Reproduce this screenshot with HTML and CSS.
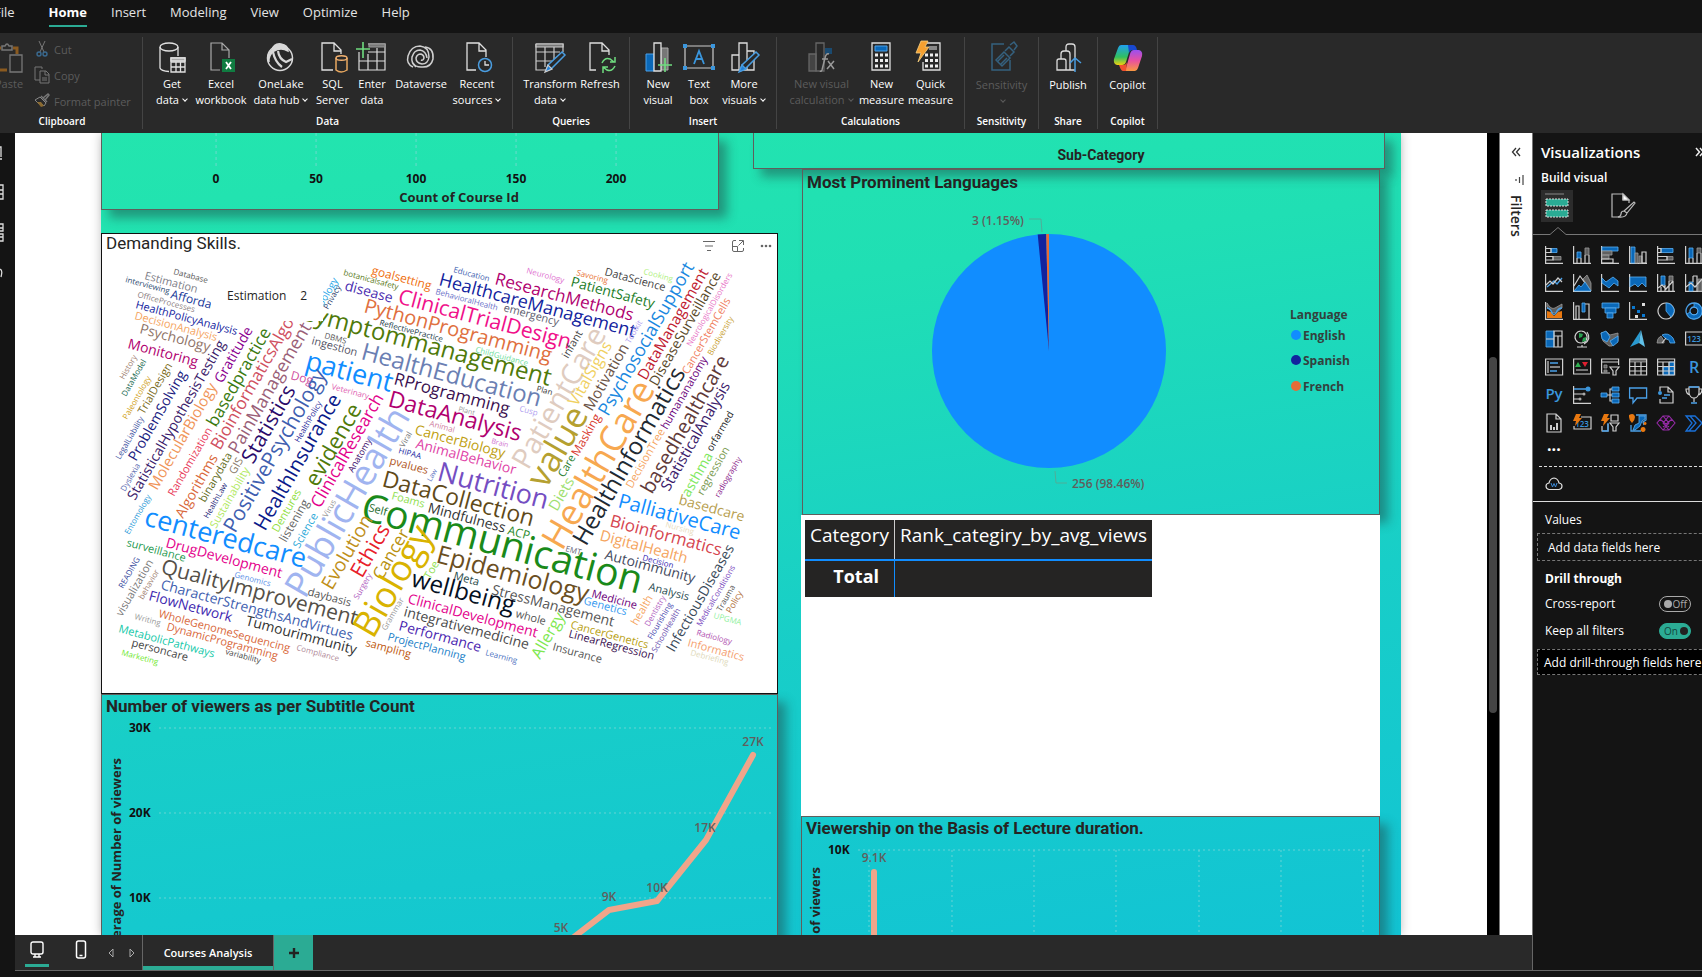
FILE: index.html
```html
<!DOCTYPE html>
<html lang="en">
<head>
<meta charset="utf-8">
<title>Courses Analysis</title>
<link rel="stylesheet" href="styles.css">
</head>
<body>
<nav class="menu">
  <button class="menu-item file">File</button>
  <button class="menu-item active">Home</button>
  <button class="menu-item">Insert</button>
  <button class="menu-item">Modeling</button>
  <button class="menu-item">View</button>
  <button class="menu-item">Optimize</button>
  <button class="menu-item">Help</button>
</nav>

<header class="ribbon">
  <section class="group g-clip">
    <div class="clip">
      <button class="tool paste off"><svg width="32" height="32" viewBox="0 0 32 32" fill="none"><path d="M6 6H2v22h10M18 6h4v6" stroke="#8a5a20" stroke-width="3"/><path d="M7 8V4h3q2-4 4 0h3v4z" stroke="#777" stroke-width="1.5"/><path d="M15 13h12v17H15z" fill="#292929" stroke="#777" stroke-width="1.3"/></svg><span>Paste</span></button>
      <div class="clip-list">
        <button class="mini off"><svg width="16" height="18" viewBox="0 0 16 18" fill="none" stroke="#777"><path d="M5 1l5 11M11 1L6 12"/><circle cx="5" cy="14" r="2" stroke="#3a6a90" stroke-width="1.4"/><circle cx="11" cy="14" r="2" stroke="#3a6a90" stroke-width="1.4"/></svg>Cut</button>
        <button class="mini off"><svg width="16" height="18" viewBox="0 0 16 18" fill="none" stroke="#777"><path d="M6 14H1V1h7v2M6 5h6l3 3v9H6zM11 5v4h4M8 12h5M8 14h5"/></svg>Copy</button>
        <button class="mini off"><svg width="16" height="18" viewBox="0 0 16 18" fill="none" stroke="#777"><path d="M9 6l5-4 1 1-4 5M7 4l6 6" stroke-width="1.5"/><path d="M6 5l6 6-2 3-3-3-2 1-4-4z" stroke="#888"/><path d="M3 10l4 5 3-1-3-4z" fill="#8a6a30" stroke="none"/></svg>Format painter</button>
      </div>
    </div>
    <h2>Clipboard</h2>
  </section>
  <section class="group g-data">
    <div class="tools">
      <button class="tool w48"><svg width="32" height="32" viewBox="0 0 32 32" fill="none" stroke="#e0e0e0" stroke-width="1.3"><ellipse cx="13" cy="5" rx="9" ry="4"/><path d="M4 5v21q1 3 9 3.500M22 5v9"/><path d="M15 16h14v14H15zM20 20v10M24.500 20v10M15 20h14M15 25h14"/><path d="M15 16h14v3H15z" fill="#aaa"/></svg><span>Get<br>data<i class="chev"></i></span></button>
      <button class="tool w50"><svg width="32" height="32" viewBox="0 0 32 32" fill="none"><path d="M15 28H6V1h11l7 7v8M17 1v7h7" stroke="#aaa" stroke-width="1.2"/><path d="M17 17h13v13H17z" fill="#107c41"/><path d="M21 20l5 7M26 20l-5 7" stroke="#fff" stroke-width="1.800"/></svg><span>Excel<br>workbook</span></button>
      <button class="tool w70"><svg width="32" height="32" viewBox="0 0 32 32" fill="none" stroke="#d8d8d8" stroke-width="1.500"><circle cx="15" cy="16" r="12.500"/><path d="M7 8Q9 1 16 2q7 1 7 7Q16 5 9 9 3 14 4 20 1 12 7 8z" fill="#d8d8d8"/><path d="M8 10q2 10 9 15M13 9q1 8 8 11l6-3" stroke-width="2.200"/></svg><span>OneLake<br>data hub<i class="chev"></i></span></button>
      <button class="tool w33"><svg width="32" height="32" viewBox="0 0 32 32" fill="none"><path d="M16 28H5V1h12l7 7v4M17 1v8h7" stroke="#e0e0e0" stroke-width="1.3"/><path d="M19 16v12q5 4 11 0V16" stroke="#e8a860" stroke-width="1.500"/><ellipse cx="24.500" cy="16" rx="5.500" ry="2.300" stroke="#f0b070" stroke-width="1.500"/></svg><span>SQL<br>Server</span></button>
      <button class="tool w46"><svg width="32" height="32" viewBox="0 0 32 32" fill="none" stroke="#ddd" stroke-width="1.2"><path d="M3 10v18h26V2H12M12 10h17M3 19h26M12 12v16M21 6v22"/><path d="M13 2h16v3H13z" fill="#777" stroke="#999"/><path d="M7 0v16M0 7h14" stroke="#6fdc7f" stroke-width="1.600"/></svg><span>Enter<br>data</span></button>
      <button class="tool w52"><svg width="32" height="32" viewBox="0 0 32 32" fill="none" stroke="#d0d0d0" stroke-width="1.500"><path d="M8 25Q1 22 3 14 6 4 15 4q9 1 9 11-1 7-7 7-6-1-6-6 1-4 5-4 3 1 3 4-1 3-3 2"/><path d="M11 25Q6 21 7 15q2-7 8-7 6 1 7 8"/><path d="M20 5q9 1 8 12-2 9-12 8-6 0-8-4"/></svg><span>Dataverse</span></button>
      <button class="tool w60"><svg width="32" height="32" viewBox="0 0 32 32" fill="none"><path d="M15 28H6V1h12l7 7v7M18 1v8h7" stroke="#e0e0e0" stroke-width="1.3"/><circle cx="24" cy="23" r="6.500" stroke="#4a9de0" stroke-width="1.500"/><path d="M24 19v4h4" stroke="#ddd" stroke-width="1.300"/></svg><span>Recent<br>sources<i class="chev"></i></span></button>
    </div>
    <h2>Data</h2>
  </section>
  <section class="group g-queries">
    <div class="tools">
      <button class="tool w58"><svg width="32" height="32" viewBox="0 0 32 32" fill="none" stroke="#ccc" stroke-width="1.2"><path d="M2 2h27v8M2 2v26h12M2 10h24M2 19h16M11 5v20M20 5v12"/><path d="M2 2h27v3H2z" fill="#777"/><path d="M12 29l2-6L28 10l3 3-14 14z" fill="#292929" stroke="#4a9de0" stroke-width="1.500"/><path d="M11 30l3-7 4 4z" fill="#2080d8"/></svg><span>Transform<br>data<i class="chev"></i></span></button>
      <button class="tool w42"><svg width="32" height="32" viewBox="0 0 32 32" fill="none"><path d="M12 28H6V1h12l7 7v5M18 1v8h7" stroke="#ddd" stroke-width="1.3"/><path d="M18 21q3-6 8-4l4 3M31 15v5h-5M31 24q-3 6-8 4l-4-3M19 31v-6h5" stroke="#6fdc7f" stroke-width="1.500"/></svg><span>Refresh</span></button>
    </div>
    <h2>Queries</h2>
  </section>
  <section class="group g-insert">
    <div class="tools">
      <button class="tool w38"><svg width="32" height="32" viewBox="0 0 32 32" fill="none"><path d="M4 12h8v17H4z" fill="#0a68b8" stroke="#4aa0e8"/><path d="M19 6h7v22h-7z" fill="#777" stroke="#aaa"/><path d="M12 1h7v28h-7z" fill="#292929" stroke="#e0e0e0" stroke-width="1.3"/><path d="M23 16v14M16 23h14" stroke="#6fdc7f" stroke-width="1.600"/></svg><span>New<br>visual</span></button>
      <button class="tool w44"><svg width="34" height="32" viewBox="0 0 34 32" fill="none"><path d="M3 4h28v22H3z" stroke="#ccc" stroke-width="1.2"/><path d="M1 2h4v4H1zM29 2h4v4h-4zM1 24h4v4H1zM29 24h4v4h-4z" fill="#3a96dd"/><path d="M12 22l5-13 5 13M14 17h6" stroke="#3a96dd" stroke-width="1.800"/></svg><span>Text<br>box</span></button>
      <button class="tool w46"><svg width="32" height="32" viewBox="0 0 32 32" fill="none" stroke="#ddd" stroke-width="1.3"><path d="M4 28V13h7v15zM11 28V1h8v27zM19 9h7v19h-7z"/><path d="M12 29l2-6L28 10l3 3-14 14z" fill="#292929" stroke="#4a9de0" stroke-width="1.500"/><path d="M11 30l3-7 4 4z" fill="#2080d8" stroke="#4a9de0"/></svg><span>More<br>visuals<i class="chev"></i></span></button>
    </div>
    <h2>Insert</h2>
  </section>
  <section class="group g-calc">
    <div class="tools">
      <button class="tool w72 off"><svg width="32" height="32" viewBox="0 0 32 32" fill="none" stroke="#666" stroke-width="1.3"><path d="M3 12h7v17H3z" fill="#444"/><path d="M10 1h8v28h-8z"/><path d="M19 6h7v6h-7z" fill="#1a4a70" stroke="none"/><path d="M23 12q-3-1-4 4l-3 12q-1 2-2 1M16 17h6M22 19l6 8M28 19l-7 8" stroke="#999" stroke-width="1.500"/></svg><span>New visual<br>calculation<i class="chev"></i></span></button>
      <button class="tool w48"><svg width="32" height="32" viewBox="0 0 32 32" fill="none"><path d="M6 1h18v27H6z" stroke="#ddd" stroke-width="1.3"/><path d="M9 4h12v5H9z" fill="#0a68b8" stroke="#4aa0e8"/><path d="M9 13h13M9 18.500h13M9 24h13" stroke="#eee" stroke-width="3" stroke-dasharray="3 2"/></svg><span>New<br>measure</span></button>
      <button class="tool w50"><svg width="32" height="32" viewBox="0 0 32 32" fill="none"><path d="M12 1h13v27H8V20" stroke="#ddd" stroke-width="1.3"/><path d="M14 4h8v4h-8z" fill="#888"/><path d="M10 13h13M10 18.500h13M10 24h13" stroke="#eee" stroke-width="3" stroke-dasharray="3 2"/><path d="M6-1h7l-3 6h4L3 20l3-9H1z" fill="#f5a030" stroke="#f8d080" stroke-width=".8"/></svg><span>Quick<br>measure</span></button>
    </div>
    <h2>Calculations</h2>
  </section>
  <section class="group g-sens">
    <div class="tools">
      <button class="tool w72 off low"><svg width="32" height="32" viewBox="0 0 32 32" fill="none" stroke="#35617f" stroke-width="1.500"><path d="M18 2H6v26h18V18"/><path d="M10 18l8-8 6 6-8 8zM19 9l4-4 5 5-4 4M24 3l4-3 3 4-3 4M12 19l6-6M15 22l6-6"/></svg><span>Sensitivity<br><i class="chev"></i></span></button>
    </div>
    <h2>Sensitivity</h2>
  </section>
  <section class="group g-share">
    <div class="tools">
      <button class="tool w48 low"><svg width="32" height="32" viewBox="0 0 32 32" fill="none" stroke="#ddd" stroke-width="1.3"><path d="M5 28V19q0-2 2-2h5q2 0 2 2v9zM9 17v-5q0-3 3-3h3q3 0 3 3v16h-4M14 9V5q0-3 3-3h3q3 0 3 3v11M18 28h5"/><path d="M23 30V16M18 21l5-5 6 5" stroke="#4a9de0" stroke-width="1.500"/></svg><span>Publish</span></button>
    </div>
    <h2>Share</h2>
  </section>
  <section class="group g-copilot">
    <div class="tools">
      <button class="tool w48 low"><svg width="32" height="32" viewBox="0 0 32 32"><defs><linearGradient id="ca" x1="0" y1="0" x2="0" y2="1"><stop offset="0" stop-color="#20a0f0"/><stop offset=".6" stop-color="#30c060"/><stop offset="1" stop-color="#f0d010"/></linearGradient><linearGradient id="cb" x1="0" y1="0" x2="0" y2="1"><stop offset="0" stop-color="#9a50f0"/><stop offset=".5" stop-color="#e850a0"/><stop offset="1" stop-color="#f89840"/></linearGradient></defs><path d="M9 3h12l-3 4-4 13q-1 3-4 3H5q-4-1-3-6L6 6q1-3 3-3z" fill="url(#ca)"/><path d="M16 3h5q3 0 4 5h-4q-3 0-4 3z" fill="#1848d0"/><path d="M23 29H11l3-3 4-14q1-4 4-4h5q4 1 3 6l-4 12q-1 3-3 3z" fill="url(#cb)"/><path d="M14 29H11q-2 0-4-6h4q3 0 4-3z" fill="#f05030"/></svg><span>Copilot</span></button>
    </div>
    <h2>Copilot</h2>
  </section>
</header>

<div class="work">
  <aside class="rail">
    <svg width="15" height="140" viewBox="0 0 15 140" fill="none" stroke="#ddd" stroke-width="1.3"><path d="M0 0h1v10M0 12h2M0 38h3v14H0M0 43h3M0 47h3M0 77h3v7H0M0 81h3M0 87h3v7H0M0 90h3M0 122q3 1 1 8"/></svg>
  </aside>
  <div class="main">
    <div class="canvas">
      <div class="page-area">
        <div class="report">
          <div class="col">
            <article class="card c-count">
              <svg class="plot" viewBox="102 133 616 76">
                <path class="grid-line light" d="M216 133v36M316 133v36M416 133v36M516 133v36M616 133v36"/>
                <g class="tick mid"><text x="216" y="183">0</text><text x="316" y="183">50</text><text x="416" y="183">100</text><text x="516" y="183">150</text><text x="616" y="183">200</text></g>
                <text class="axis mid" x="459" y="202">Count of Course Id</text>
              </svg>
            </article>
            <article class="card c-cloud">
              <div class="card-head"><h3>Demanding Skills.</h3>
                <div class="head-icons">
                  <svg width="14" height="12" viewBox="0 0 14 12" stroke="#666"><path d="M1 1.500h12M3 6h8M5 10.500h4"/></svg>
                  <svg width="14" height="14" viewBox="0 0 14 14" fill="none" stroke="#666"><path d="M5 1.500H3q-1.500 0-1.500 1.500v8q0 1.500 1.500 1.500h8q1.500 0 1.500-1.500V9M8 1.500h4.500V6M12 2L7.500 6.500M1.500 7.500h5v5"/></svg>
                  <svg width="12" height="4" viewBox="0 0 12 4" fill="#666"><circle cx="2" cy="2" r="1.300"/><circle cx="6" cy="2" r="1.300"/><circle cx="10" cy="2" r="1.300"/></svg>
                </div>
              </div>
              <svg class="plot" id="cloud" viewBox="102 257 675 436"></svg>
              <div class="tip"><span>Estimation</span><span>2</span></div>
            </article>
            <article class="card c-line">
              <h3 class="bold">Number of viewers as per Subtitle Count</h3>
              <svg class="plot" viewBox="102 716 675 260">
                <path class="grid-line" d="M159 727h612M159 812h612M159 897h612"/>
                <g class="tick"><text x="129" y="731">30K</text><text x="129" y="816">20K</text><text x="129" y="901">10K</text></g>
                <path class="series" d="M561 946l48-37 48-9 49-61 47-85"/>
                <g class="value mid"><text x="753" y="745">27K</text><text x="705" y="831">17K</text><text x="657" y="891">10K</text><text x="609" y="900">9K</text><text x="561" y="931">5K</text></g>
                <text class="axis end" transform="translate(121 757) rotate(-90)">Average of Number of viewers</text>
              </svg>
            </article>
          </div>
          <div class="col">
            <article class="card c-sub"><h4>Sub-Category</h4></article>
            <article class="card c-pie">
              <h3 class="bold">Most Prominent Languages</h3>
              <svg class="plot" viewBox="803 193 576 321">
                <circle cx="1049" cy="351" r="117" fill="#118dff"/>
                <path d="M1049 351L1037.700 234.500A117 117 0 0 1 1046.200 234z" fill="#12239e"/>
                <path d="M1049 351L1046.200 234H1049z" fill="#e66c37"/>
                <path class="leader" d="M1029 219h12l1 13M1055 471l1 12h11"/>
                <g class="value"><text x="972" y="225">3 (1.15%)</text><text x="1072" y="488">256 (98.46%)</text></g>
                <g class="legend"><text x="1290" y="319">Language</text><text x="1303" y="340">English</text><text x="1303" y="365">Spanish</text><text x="1303" y="391">French</text></g>
                <circle cx="1296" cy="335" r="5" fill="#118dff"/><circle cx="1296" cy="360" r="5" fill="#12239e"/><circle cx="1296" cy="386" r="5" fill="#e66c37"/>
              </svg>
            </article>
            <article class="c-table">
              <table>
                <thead><tr><th>Category</th><th>Rank_categiry_by_avg_views</th></tr></thead>
                <tbody><tr><td>Total</td><td></td></tr></tbody>
              </table>
            </article>
            <article class="card c-bar">
              <h3 class="bold">Viewership on the Basis of Lecture duration.</h3>
              <svg class="plot" viewBox="802 838 577 130">
                <path class="grid-line" d="M858 849h512M869 849v120M952 849v120M1034 849v120M1116 849v120M1199 849v120M1281 849v120M1363 849v120"/>
                <g class="tick"><text x="828" y="853">10K</text></g>
                <path class="series" d="M874 871v100"/>
                <text class="value mid" x="874" y="861">9.1K</text>
                <text class="axis end" transform="translate(820 866) rotate(-90)">Average of Number of viewers</text>
              </svg>
            </article>
          </div>
        </div>
      </div>
      <div class="scroll"><div class="thumb"></div></div>
      <aside class="filters">
        <svg width="10" height="10" viewBox="0 0 10 10" fill="none" stroke="#333" stroke-width="1.300"><path d="M5 1L1.500 5 5 9M9 1L5.500 5 9 9"/></svg>
        <svg class="funnel" width="10" height="12" viewBox="0 0 10 12" stroke="#444" stroke-width="1.200"><path d="M9 1v10M5.500 3v6M2 5v2"/></svg>
        <span>Filters</span>
      </aside>
    </div>
    <footer class="tabs">
      <button class="view on" aria-label="Desktop layout"><svg width="14" height="18" viewBox="0 0 14 18" fill="none" stroke="#fff" stroke-width="1.400"><rect x="1" y="1" width="12" height="12" rx="2"/><path d="M5 13v3M9 13v3M3 16h8"/></svg></button>
      <button class="view" aria-label="Mobile layout"><svg width="12" height="20" viewBox="0 0 12 20" fill="none" stroke="#fff" stroke-width="1.500"><rect x="1.500" y="1" width="9" height="17" rx="2"/><path d="M4.500 15.500h3"/></svg></button>
      <button class="step" aria-label="Previous page"><svg width="6" height="10" viewBox="0 0 6 10" fill="none" stroke="#aaa"><path d="M5 1v8L1 5z"/></svg></button>
      <button class="step" aria-label="Next page"><svg width="6" height="10" viewBox="0 0 6 10" fill="none" stroke="#aaa"><path d="M1 1v8l4-4z"/></svg></button>
      <button class="tab">Courses Analysis</button>
      <button class="add" aria-label="New page"><svg width="12" height="12" viewBox="0 0 12 12" stroke="#222" stroke-width="2.400"><path d="M6 1v10M1 6h10"/></svg></button>
    </footer>
  </div>
  <aside class="viz">
    <div class="viz-head"><h2>Visualizations</h2><svg width="10" height="10" viewBox="0 0 10 10" fill="none" stroke="#eee" stroke-width="1.500"><path d="M1 1l3.500 4L1 9M5 1l3.500 4L5 9"/></svg></div>
    <h3>Build visual</h3>
    <div class="modes">
      <button class="mode on" aria-label="Build"><svg width="24" height="26" viewBox="0 0 24 26" fill="none"><path d="M0 1h19" stroke="#888"/><path d="M1 6h22v7H1zM1 17h22v7H1z" fill="#2bab94" stroke="#ddd" stroke-dasharray="2 1"/></svg></button>
      <button class="mode" aria-label="Format"><svg width="26" height="26" viewBox="0 0 26 26" fill="none" stroke="#bbb" stroke-width="1.200"><path d="M8 24H1V1h11l6 6v3M12 1v6h6"/><path d="M12 1v6h6z" fill="#fff"/><path d="M13 18L23 9l1 1-8 10zM13 18q-3 0-3 3 0 2-3 3 8 1 9-4z"/></svg></button>
    </div>
    <svg class="caret" viewBox="0 0 170 10" width="170" height="10" fill="none" stroke="#777"><path d="M0 8.500h17l8-7 8 7h140"/></svg>
    <div class="icons" id="icons"></div>
    <div class="more">...</div>
    <div class="cloud-row"><svg width="18" height="14" viewBox="0 0 18 14" fill="none"><path d="M4 12.500q-3-.5-3-3.500 0-2.500 3-3 1-4.500 5-5 4 .5 5 5 3 .5 3 3 0 3-3 3.500z" stroke="#ddd" stroke-width="1.200"/><path d="M6 6l1.500 4L9 6.500l1.500 3.500L12 6" stroke="#3a8ad8"/></svg></div>
    <div class="fields">
      <p>Values</p>
      <button class="drop">Add data fields here</button>
      <h4>Drill through</h4>
      <div class="row"><label for="cr">Cross-report</label><span class="toggle"><input type="checkbox" id="cr"><span>Off</span></span></div>
      <div class="row"><label for="kf">Keep all filters</label><span class="toggle checked"><input type="checkbox" id="kf" checked><span>On</span></span></div>
      <button class="drop dark">Add drill-through fields here</button>
    </div>
  </aside>
</div>
<div class="status"></div>
<script src="script.js"></script>
</body>
</html>
```
FILE: styles.css
```css
* { box-sizing: border-box; }
body { margin: 0; height: 100vh; display: flex; flex-direction: column; overflow: hidden; background: #141414; color: #fff; font-family: "Open Sans", "Noto Sans", sans-serif; font-size: 12px; }
button { background: none; border: 0; padding: 0; margin: 0; color: inherit; font: inherit; }
h2, h3, h4, p { margin: 0; font-weight: 400; }
svg { display: block; flex: none; overflow: visible; }

.menu { height: 33px; flex: none; display: flex; gap: 24px; padding-top: 2px; margin-left: -6px; }
.menu-item { height: 25px; font-size: 13px; line-height: 20px; padding-bottom: 3px; color: #e4e4e4; border-bottom: 2px solid transparent; }
.menu-item.file { margin-right: 10px; }
.menu-item.active { font-weight: 700; color: #fff; border-color: #2bab94; }

.ribbon { height: 100px; flex: none; display: flex; background: #292929; padding: 4px 0; }
.group { display: flex; flex-direction: column; justify-content: space-between; border-right: 1px solid #444; height: 92px; padding-top: 5px; }
.group h2 { font-size: 10px; line-height: 16px; text-align: center; font-weight: 600; }
.g-clip { width: 143px; }
.g-clip h2 { padding-right: 18px; }
.g-data { width: 370px; }
.g-queries { width: 117px; }
.g-insert { width: 147px; }
.g-calc { width: 188px; }
.g-sens { width: 74px; }
.g-share { width: 59px; }
.g-copilot { width: 60px; }
.tools { display: flex; justify-content: center; }
.tool { display: flex; flex-direction: column; align-items: center; white-space: nowrap; line-height: 16px; gap: 2px; font-size: 11px; font-weight: 500; }
.tool.low span { padding-top: 1px; }
.tool span { text-align: center; }
.w33 { width: 33px; } .w38 { width: 38px; } .w42 { width: 42px; } .w44 { width: 44px; } .w46 { width: 46px; } .w48 { width: 48px; }
.w50 { width: 50px; } .w52 { width: 52px; } .w58 { width: 58px; } .w60 { width: 60px; } .w70 { width: 70px; } .w72 { width: 72px; }
.off { color: #5c5c5c; }
.chev { display: inline-block; width: 4px; height: 4px; margin: 0 1px 3px 4px; border: solid currentColor; border-width: 0 1px 1px 0; transform: rotate(45deg); }
.clip { display: flex; }
.paste { width: 33px; margin-left: -5px; align-items: flex-start; }
.clip-list { display: flex; flex-direction: column; gap: 8px; padding-left: 6px; margin-top: -2px; }
.mini { display: flex; gap: 4px; align-items: center; height: 18px; white-space: nowrap; font-size: 11px; }

.work { flex: 1; min-height: 0; display: flex; }
.rail { width: 15px; flex: none; padding-top: 14px; background: #141414; }
.main { flex: 1; min-width: 0; display: flex; flex-direction: column; border-bottom: 1px solid #666; }
.canvas { flex: 1; min-height: 0; display: flex; background: #fff; }
.page-area { flex: 1; min-width: 0; overflow: hidden; padding: 0 86px; }
.report { display: grid; grid-template-columns: 677fr 584fr; column-gap: 23px; padding-right: 16px; height: 100%; background: linear-gradient(172deg, #23e5ae 0%, #20dfb4 25%, #18cec8 62%, #12c4d4 100%); box-shadow: 0 0 10px rgba(0,0,0,.25); }
.col { min-width: 0; color: #252423; }
.card { border: 1px solid #605e5c; box-shadow: 8px 8px 10px rgba(30,60,60,.45); position: relative; }
.plot { width: 100%; height: auto; font-family: "Open Sans", sans-serif; }
h3 { color: #252423; }
.card h3 { font-family: Roboto, sans-serif; font-size: 17px; line-height: 22px; padding-left: 4px; }
.card h3.bold { font-weight: 700; }
.c-count { width: 91.300%; border-top: 0; margin-bottom: 23px; }
.c-cloud { background: #fff; border-color: #111; box-shadow: none; }
.card-head { display: flex; justify-content: space-between; height: 23px; }
.card-head h3 { line-height: 18px; }
.head-icons { display: flex; gap: 15px; align-items: center; padding-right: 5px; }
.tip { position: absolute; left: 109px; top: 35px; width: 112px; height: 52px; padding: 0 16px; display: flex; align-items: center; justify-content: space-between; background: #fff; font-size: 12px; }
.c-sub { margin-left: -48px; height: 36px; border-top: 0; display: flex; justify-content: center; padding: 12px 0 0 64px; }
.c-sub h4 { font-family: Roboto, sans-serif; font-size: 14px; line-height: 20px; font-weight: 700; }
.c-pie { margin: 0 5px 0 1px; }
.c-pie h3 { padding-top: 1px; }
.c-table { background: #fff; height: 301px; margin-right: 5px; padding: 5px 4px; position: relative; }
.c-bar { margin-right: 5px; }
table { border-collapse: collapse; background: #252423; color: #fff; font-size: 19px; }
th, td { padding: 2px 5px; height: 37px; vertical-align: top; font-weight: 400; text-align: left; line-height: 26px; }
th { height: 40px; border-bottom: 2px solid #118dff; }
th:first-child { border-right: 1px solid #ccc; }
td:first-child { border-right: 1px solid #118dff; font-weight: 700; text-align: right; padding-right: 15px; font-size: 18px; }
.grid-line { stroke: #8ad8d8; stroke-width: 1; stroke-dasharray: 2 3; fill: none; opacity: .7; }
.grid-line.light { stroke-dasharray: 3 3; }
.tick { font-size: 12px; font-weight: 700; fill: #111; }
.value { font-size: 12px; font-weight: 600; fill: #605e5c; }
.axis { font-size: 13px; font-weight: 700; fill: #252423; }
.legend { font-size: 12px; font-weight: 700; fill: #33413d; }
.mid { text-anchor: middle; }
.end { text-anchor: end; }
.series { stroke: #f0a58a; stroke-width: 6; fill: none; stroke-linecap: round; stroke-linejoin: round; }
.leader { stroke: #4fae98; fill: none; }
.scroll { width: 12px; flex: none; background: #000; padding: 224px 2px 0; }
.thumb { height: 356px; border-radius: 4px; background: #444; }
.filters { width: 34px; flex: none; border: solid #777; border-width: 0 1px; display: flex; flex-direction: column; align-items: center; padding-top: 14px; gap: 17px; color: #252423; }
.filters .funnel { margin-left: 6px; }
.filters span { writing-mode: vertical-rl; font-size: 14px; margin-top: -8px; line-height: 18px; font-weight: 600; }

.tabs { height: 35px; flex: none; display: flex; background: #292929; border-right: 1px solid #666; }
.view { width: 24px; margin-left: 10px; display: flex; justify-content: center; align-items: center; border-bottom: 3px solid transparent; height: 32px; }
.view.on { border-color: #2bab94; }
.view + .view { margin-left: 20px; }
.step { width: 21px; padding-left: 8px; }
.view + .step { margin-left: 7px; }
.tab { width: 132px; border: solid #666; border-width: 0 1px; box-shadow: inset 0 -4px #2bab94; font-weight: 600; font-size: 11px; }
.add { width: 39px; background: #2bab94; display: flex; align-items: center; justify-content: center; }
.status { height: 6px; flex: none; background: #141414; }

.viz { width: 169px; flex: none; overflow: hidden; border-bottom: 1px solid #666; }
.viz-head { display: flex; align-items: center; justify-content: space-between; padding: 8px 0 0 8px; width: 172px; }
.viz h2 { font-size: 15px; line-height: 22px; font-weight: 600; }
.viz h3 { font-size: 12px; line-height: 20px; font-weight: 600; color: #fff; padding: 5px 0 2px 8px; }
.modes { display: flex; gap: 35px; padding-left: 8px; }
.mode { width: 32px; height: 32px; display: flex; align-items: center; justify-content: center; }
.mode.on { background: #2c2c2c; }
.caret { margin-top: 4px; }
.icons { display: grid; grid-template-columns: repeat(6, 18px); gap: 10px; padding: 10px 0 0 12px; }
.more { font-size: 16px; line-height: 16px; font-weight: 700; padding: 5px 0 0 14px; }
.cloud-row { margin: 13px 0 0 6px; border-top: 1px dashed #ddd; padding: 10px 0 0 6px; height: 35px; }
.fields { border-top: 1px solid #ddd; padding-left: 4px; font-size: 12px; }
.fields p, .fields h4 { line-height: 18px; padding-left: 8px; }
.fields p { padding-top: 9px; }
.fields h4 { font-weight: 700; padding-top: 9px; padding-bottom: 2px; }
.drop { display: block; width: 180px; height: 28px; border: 1px dashed #777; text-align: left; padding-left: 10px; margin-top: 4px; white-space: nowrap; }
.drop.dark { background: #000; height: 26px; margin-top: 5px; padding-left: 6px; }
.row { display: flex; justify-content: space-between; align-items: center; padding: 0 11px 0 8px; height: 27px; }
.row label { line-height: 18px; }
.toggle { position: relative; width: 32px; height: 16px; border: 1px solid #aaa; border-radius: 8px; color: #aaa; font-size: 10px; line-height: 14px; text-align: right; padding-right: 3px; }
.toggle input { appearance: none; position: absolute; left: 4px; top: 3px; width: 8px; height: 8px; margin: 0; border-radius: 50%; background: #aaa; }
.toggle.checked { background: #2bab94; border-color: #2bab94; color: #14453c; text-align: left; padding-left: 4px; }
.toggle.checked input { left: 20px; background: #222; }
```
FILE: script.js
```js
// Words as [text, x, y, extent, colour]. Extent is horizontal for the flat words, vertical for the steep ones.
const flat = [
["Database",173,274,33,"#555"],["Estimation",144,279,52,"#808088"],["interviewing",125,282,43,"#2a4a70"],["Affordability",170,298,64,"#1a3a9a"],
["OfficeProcesses",137,297,56,"#8a7d80"],["HealthPolicyAnalysis",135,308,101,"#12239e"],["DecisionAnalysis",134,319,82,"#f5a55f"],["Psychology",139,333,72,"#8f7468"],
["Monitoring",127,348,71,"#b0006f"],["Dog",290,379,21,"#d050a0"],["patient",304,369,86,"#118dff"],["DBMS",324,338,22,"#555"],["ingestion",311,344,46,"#555566"],
["botanicalsafety",343,275,54,"#5a7a1a"],["disease",344,290,47,"#4a2db0"],["goalsetting",371,274,57,"#f07010"],["ClinicalTrialDesign",397,303,168,"#f0108a"],
["PythonProgramming",363,312,189,"#e07040"],["symptommanagement",303,320,244,"#4f7a0a"],["ReflectivePractice",379,325,61,"#1a3a4a"],["HealthEducation",360,359,176,"#6b7fb3"],
["RProgramming",393,384,118,"#3a1050"],["DataAnalysis",387,406,134,"#b0006f"],["Veterinary",331,389,35,"#e060b0"],["Animal",429,426,25,"#d07fa0"],
["CancerBiology",414,434,92,"#c0a010"],["AnimalBehavior",415,448,101,"#e044a7"],["HIPAA",398,453,22,"#12239e"],["pvalues",389,464,39,"#b0581f"],
["Education",453,272,35,"#3f5fb0"],["HealthcareManagement",438,285,191,"#12239e"],["BehavioralHealth",435,294,60,"#6a70c8"],["emergency",503,311,55,"#606070"],
["ResearchMethods",494,284,139,"#b0006f"],["Neurology",526,273,38,"#e070d0"],["Savoring",576,275,31,"#e87030"],["PatientSafety",570,286,82,"#1d7d2a"],
["DataScience",604,275,60,"#444"],["Cooking",643,274,30,"#b0f080"],["ChildGuidance",475,352,52,"#70e0a0"],["Plan",536,391,15,"#333"],["Cusp",519,411,18,"#b0a0f0"],
["Plant",458,411,17,"#999"],["Brain",491,443,17,"#d070d0"],["Nutrition",436,480,109,"#744ec2"],["DataCollection",381,486,154,"#5f4a1a"],["Mindfulness",427,512,78,"#333"],
["ACP",507,534,21,"#2a8a2a"],["Communication",359,519,282,"#1a8a1a"],["Epidemiology",435,562,149,"#6b4f1f"],["Meta",453,579,25,"#1f4a4a"],["wellbeing",410,586,103,"#05101f"],
["StressManagement",491,594,122,"#555"],["EMT",565,551,16,"#667"],["PalliativeCare",617,507,124,"#118dff"],["Nursing",665,527,28,"#e8dcc0"],["Bioinformatics",609,526,113,"#d64550"],
["DigitalHealth",599,540,85,"#f5a55f"],["Autoimmunity",604,559,92,"#444a60"],["Decision",642,560,30,"#3020b0"],["Analysis",648,590,40,"#1f4a4f"],["basedcare",678,504,65,"#b8a050"],
["Medicine",591,597,46,"#6b007b"],["Genetics",583,604,43,"#3599f0"],["whole",515,617,29,"#555"],["ClinicalDevelopment",407,603,132,"#e3008c"],["integrativemedicine",403,616,127,"#4a4a4a"],
["Performance",398,630,81,"#4a25b0"],["ProjectPlanning",387,640,78,"#1a80c8"],["Learning",485,655,30,"#4a6fc0"],["CancerGenetics",570,628,77,"#b8a010"],["LinearRegression",568,637,84,"#3a1050"],
["Insurance",552,650,48,"#555"],["UPGMA",713,618,27,"#90f0a0"],["Radiology",696,635,36,"#b050b0"],["Informatics",687,646,55,"#f5a070"],["Debriefing",690,655,37,"#ddd8b8"],
["centeredcare",143,525,160,"#118dff"],["DrugDevelopment",165,547,119,"#e3008c"],["surveillance",126,546,58,"#1f9a50"],["QualityImprovement",160,573,192,"#555048"],["Genomics",234,577,35,"#5a8fe8"],
["CharacterStrengthsAndVirtues",160,589,194,"#3f5fb0"],["daybasis",307,595,42,"#555"],["FlowNetwork",148,600,85,"#3f2ab0"],["Tumourimmunity",245,625,110,"#333"],
["WholeGenomeSequencing",158,617,133,"#d9683a"],["DynamicProgramming",166,630,112,"#d9683a"],["Writing",134,619,25,"#999"],["MetabolicPathways",118,632,96,"#12c8a8"],
["personcare",131,646,56,"#444"],["Marketing",121,655,36,"#70e830"],["variability",225,654,34,"#444"],["Compliance",296,650,42,"#b08a98"],["sampling",365,646,45,"#c05a10"],
["Self",368,511,18,"#1a6a2a"],["Foams",391,499,32,"#90e050"]
];
const steep = [
["History",124,380,22,"#a08070"],["DataModel",126,397,35,"#1a6a50"],["Paleontology",127,420,42,"#d0a020"],["TrialDesign",144,415,48,"#7a6a20"],["LegalLiability",120,460,41,"#3a50a0"],
["ProblemSolving",136,462,90,"#1a2080"],["StatisticalHypothesisTesting",135,501,162,"#3a1a6a"],["Gratitude",222,384,54,"#8a0090"],["MolecularBiology",157,491,102,"#f0955a"],
["Randomization",174,497,66,"#e83a5a"],["Algorithms",183,519,62,"#d9683a"],["basedpractice",216,428,95,"#3a7a10"],["BioinformaticsAlgorithms",220,451,174,"#d05060"],
["PainManagement",238,455,126,"#9a5f78"],["binarydata",205,503,49,"#5f6a20"],["GIS",235,475,15,"#8a7a6a"],["HealthLaw",208,519,35,"#2a2a7a"],["Sustainability",216,529,60,"#b0e860"],
["Statistics",253,465,73,"#2a0a6a"],["PositivePsychology",235,534,160,"#3f5fb0"],["HealthInsurance",265,532,132,"#0a1a8a"],["HealthPolicy",299,443,39,"#2a2a9a"],["evidence",317,488,79,"#4f7a0a"],
["Dentures",278,533,41,"#90e040"],["listening",286,543,41,"#666"],["Science",299,549,34,"#2aa8d8"],["Virus",327,518,16,"#999"],["ClinicalResearch",320,509,113,"#e3008c"],["Anatomy",353,473,31,"#3a0a6a"],
["PublicHealth",305,600,186,"#a0b4f0"],["Viral",404,448,15,"#777"],["Law",431,482,12,"#5a6fc0"],["Evolution",332,591,70,"#c0901a"],["Ethics",362,579,50,"#e8202a"],["Cancer",382,581,48,"#b89010"],
["Surgery",358,600,25,"#b060c0"],["Biology",373,640,105,"#d9b300"],["Grammar",386,631,31,"#999"],["Toe",430,580,16,"#90e050"],["Dyslexia",125,492,26,"#5a6ab0"],["Entomology",129,535,39,"#2a9ad8"],
["READING",123,589,30,"#2f3f9a"],["visualization",122,617,54,"#777"],["behavior",143,600,27,"#a08070"],["Zoology",320,312,32,"#2aa8e8"],["Privacy",328,310,23,"#2a3a6a"],
["PatientCare",528,471,137,"#dfccc0"],["infant",568,359,27,"#444"],["VitalSigns",577,407,60,"#f0d060"],["Toolkit",630,344,21,"#b0a0f0"],["Motivation",592,412,64,"#6b5448"],
["PsychosocialSupport",608,417,150,"#1a88e0"],["DataManagement",646,381,106,"#c02030"],["DiseaseSurveillance",657,387,115,"#5a4a2a"],["NeurologicalDisorders",691,347,73,"#e878c8"],
["CancerStemCells",688,375,75,"#f08060"],["Biodiversity",712,356,38,"#c8a030"],["humananatomy",667,430,73,"#6b007b"],["basedhealthcare",652,495,138,"#5f3a3a"],["StatisticalAnalysis",669,492,103,"#3a1a6a"],
["orfarmed",712,452,40,"#222"],["HealthInformatics",586,547,172,"#1f2a33"],["HealthCare",562,552,162,"#f7a850"],["value",546,490,76,"#b5a030"],["Masking",578,457,39,"#d83a30"],["Care",564,478,21,"#2a8030"],
["Diets",557,512,31,"#a0e070"],["DecisionTree",632,489,58,"#f5a55f"],["asthma",689,498,43,"#80e860"],["regression",703,496,47,"#7a9a50"],["radiography",719,498,39,"#8a1a8a"],
["InfectiousDiseases",674,653,108,"#3a4a5a"],["health",637,626,29,"#f5a55f"],["Dentistry",649,627,31,"#b060c0"],["Flourishing",652,640,37,"#4a4ab0"],["SchoolHealth",656,653,44,"#6a50b0"],
["MedicalConditions",701,627,60,"#7a4ac0"],["Trauma",721,612,25,"#555"],["Policy",731,614,21,"#b07040"],["Allergy",540,660,43,"#80e850"]
];
const cloud = document.getElementById("cloud");
const pen = document.createElement("canvas").getContext("2d");
pen.font = '100px "Open Sans"';
function draw(words, angle, ratio) {
  for (const [text, x, y, extent, colour] of words) {
    const node = document.createElementNS("http://www.w3.org/2000/svg", "text");
    node.textContent = text;
    node.setAttribute("transform", `translate(${x} ${y}) rotate(${angle})`);
    node.setAttribute("fill", colour);
    node.setAttribute("font-size", Math.round(extent / ratio / pen.measureText(text).width * 100));
    cloud.append(node);
  }
}
draw(flat, 15, 0.966);
draw(steep, -60, 0.866);

// Visual gallery: W draws a pale outline, B a blue fill, G a grey fill, L a light-blue outline, O an orange fill.
const W = d => `<path d="${d}" fill="none" stroke="#d0d0d0" stroke-width="1.200"/>`;
const B = d => `<path d="${d}" fill="#0a68b8" stroke="#5aaef0" stroke-width=".8"/>`;
const G = d => `<path d="${d}" fill="#606060" stroke="#999" stroke-width=".8"/>`;
const L = d => `<path d="${d}" fill="none" stroke="#4aa0e8" stroke-width="1.300"/>`;
const O = d => `<path d="${d}" fill="#e87810"/>`;
const axes = W("M.6 0v17.400H18");
const label = (s, size, y) => `<text x="9" y="${y}" text-anchor="middle" font-size="${size}" font-weight="600" fill="#3a96dd">${s}</text>`;
const bolt = O("M3 0h5L6 4h3L2 12l1-5H0z");
const icons = [
 ["Stacked bar", axes+B("M6 2.500h6v4H6z")+G("M8 10.500h8v3.500H8z")+W("M1 2.500h5v4H1M1 10.500h7v3.500H1")],
 ["Stacked column", axes+B("M4 6h4v6H4z")+G("M12 2h4v7h-4z")+W("M4 12v5M8 12v5M12 9v8M16 9v8")],
 ["Clustered bar", axes+B("M1 1h16v4H1z")+G("M1 5h10v4H1zM1 9h7v4H1z")+W("M1 13h11v4H1")],
 ["Clustered column", axes+B("M2 1h4v16H2z")+G("M6 7h3v10H6zM10 10h3v7h-3z")+W("M13 6h4v11h-4z")],
 ["Full bar", axes+B("M4 2.500h12v4H4z")+G("M10 10.500h6v3.500h-6z")+W("M1 2.500h3v4H1M1 10.500h9v3.500H1")],
 ["Full column", axes+B("M4 2h4v10H4z")+G("M12 2h4v5h-4z")+W("M4 12v5M8 12v5M12 7v10M16 7v10")],
 ["Line", axes+L("M2 13l7-6 3 3 5-6")+W("M1 11l4-4 3 3 5-6 4 4")],
 ["Area", G("M10 5l4-4 4 8v8z")+W("M.6 0v17.400H18M1 12l6-10 5 7")+B("M1 17l5-6 2 2 4-5 6 9z")],
 ["Stacked area", axes+B("M1 4l4 4 7-5 5 4v5l-4-3-5 5-7-5z")],
 ["Full area", axes+B("M1 3h16v10l-4-4-4 4-3-3-5 3z")],
 ["Line and stacked column", axes+B("M4 2h4v9H4z")+G("M12 2h4v5h-4z")+W("M4 11v6M8 11v6M12 7v10M16 7v10M1 14l4-3 4 4 7-8")],
 ["Line and clustered column", axes+B("M4 8h4v9H4z")+G("M13 5h4v12h-4z")+W("M8 2h4v15M8 2v6M1 13l5-4 4 4 7-8")],
 ["Ribbon", axes+G("M2 1q4 7 8 5l7-4v4l-6 5H8L2 5z")+O("M2 9l4 1 3 4 4-4 4-1v7H2z")+L("M2 6q4 1 5 5 2 3 4 0 2-5 6-5")],
 ["Waterfall", axes+W("M3 17V4h3v13M12 2h4v15M10 9V3h2")+B("M9 1h3v9H9z")],
 ["Funnel", B("M1 1h17v5H1z")+B("M4 6h11v5H4z")+B("M6 11h6v5H6z")],
 ["Scatter", axes+'<path d="M3 4h3v3H3zM8 8h3v3H8zM13 12h3v3h-3z" fill="#0a78d0"/><path d="M13 1h3v3h-3zM6 13h3v3H6z" fill="#ddd"/>'],
 ["Pie", W("M9 1a8 8 0 1 0 .1 0")+B("M9 1v8l5 6q5-6 2-10-2-4-7-4z")],
 ["Donut", L("M9 1a8 8 0 1 0 .1 0M9 5a4 4 0 1 0 .1 0")+B("M9 1v4q4 0 4 4 0 4-4 4-3 0-4-3l-3 2q2 5 7 5 8-1 8-8 0-7-8-8z")],
 ["Treemap", B("M1 1h8v16H1z")+W("M9 1h8v16H9zM9 6h8M13 6v11M1 9h8")],
 ["Map", W("M8 1a6 6 0 1 0 .1 0M14 2q5 7-3 12M4 17h10M9 15v2")+'<path d="M6 3l4 1-1 3-3 1zM10 8l3-1v4l-4 1z" fill="#28a050"/>'],
 ["Filled map", G("M0 3l6-1 3 3 8-2v8l-6 5H8l-6-5z")+B("M0 3l5-2 4 6-3 5-5-3zM9 11l8-5v6l-5 4z")],
 ["Azure map", '<path d="M12 0L1 17l9-4z" fill="#2a9ad0"/><path d="M12 0l-2 13 6 4z" fill="#60c0e8"/>'],
 ["Gauge", G("M0 13q0-5 4-7l3 5v2z")+B("M5 5q6-3 11 3l2 5h-5q0-4-4-4z")+W("M5 13l4-5")],
 ["Card", W("M.6 2h17v13H.6z")+label("123",8,12)],
 ["Multi-row card", W("M.6 1h17v16H.6zM3 3v12")+L("M5 5h8M5 13h7")+W("M5 9h10")],
 ["KPI", W("M.6 1h17v15H.6zM3 12h12")+'<path d="M2 9l3-5 3 5z" fill="#30b050"/><path d="M9 4h6l-3 5z" fill="#e02030"/>'],
 ["Slicer", W("M9 15H.6V1h17v6M1 4h16M9 9h9l-3 4v4h-3v-4z")+G("M3 7h3v3H3zM3 12h3v2H3z")],
 ["Table", G("M.6 1h17v3H.6z")+W("M.6 1h17v16H.6zM.6 8.500h17M.6 13h17M6 4v13M12 4v13")],
 ["Matrix", B("M6 9h6v8H6zM12 4h5v13h-5z")+W("M.6 1h17v16H.6zM.6 4h17M.6 8.500h17M.6 13h17M6 4v13M12 4v13")],
 ["R", label("R",16,15)],
 ["Python", label("Py",15,13)],
 ["Key influencers", axes+L("M1 3h12M15 1v4")+W("M1 8h9M1 13h5")+'<circle cx="15" cy="3" r="2.500" fill="#3a96dd"/><circle cx="11" cy="8" r="1.500" fill="#aaa"/><circle cx="7" cy="13" r="1.500" fill="#aaa"/>'],
 ["Decomposition tree", B("M0 7h6v4H0z")+B("M11 1h7v4h-7z")+B("M11 7h7v4h-7z")+B("M11 13h7v4h-7z")+W("M6 9h5M11 3H9v12h2")],
 ["Q and A", L("M.6 2h17v10H8l-4 5v-5H.6z")],
 ["Narrative", W("M3 5V1h8l5 5v11H3v-4M11 1v5h5")+L("M7 9h6M5 12h5")+'<circle cx="3" cy="7" r="2" fill="#3a96dd"/>'],
 ["Metrics", W("M4 1h10v6q-1 5-5 5T4 7zM4 3H1q0 5 4 6M14 3h3q0 5-4 6M9 12v4")+L("M6 17h6M4 1h10")],
 ["Paginated report", W("M2 0h9l5 5v13H2zM11 0v5h5")+'<path d="M5 11h2v5H5zM8 13h2v3H8zM11 9h2v7h-2z" fill="#ccc"/>'],
 ["Card (new)", W("M8 3h10v12H1v-3")+label("123",8,13)+bolt],
 ["Slicer (new)", W("M10 1h7v6h-7zM1 12v5h6v-7M9 9h9l-3 4v4h-3v-4z")+L("M7 9v8H1")+bolt],
 ["ArcGIS", L("M7 1h10v5l-3 2 1 3M2 11v6h10")+B("M10 2h6v3l-3 2-2 5-5 4H4l2-5 4-2z")+O("M0 1q5-3 6 2 0 3-3 6Q0 6 0 3zM14 13a2.500 2.500 0 1 0 .1 0M16 8a1.500 1.500 0 1 0 .1 0")],
 ["Power Apps", '<path d="M6 2h6l6 7-6 7H6L0 9zM6 2l6 7-6 7M12 2L6 9l6 7M3 5l9 8M15 5l-9 8" fill="none" stroke="#962aa8" stroke-width="1.100"/>'],
 ["Power Automate", '<path d="M1 2h9l7 7-7 8H1l6-8zM5 2l6 7-7 8" fill="none" stroke="#1a70d8" stroke-width="1.300"/>']
];
document.getElementById("icons").innerHTML = icons.map(([name, art]) => `<svg width="18" height="18" viewBox="0 0 18 18" role="img" aria-label="${name}">${art}</svg>`).join("");
```
